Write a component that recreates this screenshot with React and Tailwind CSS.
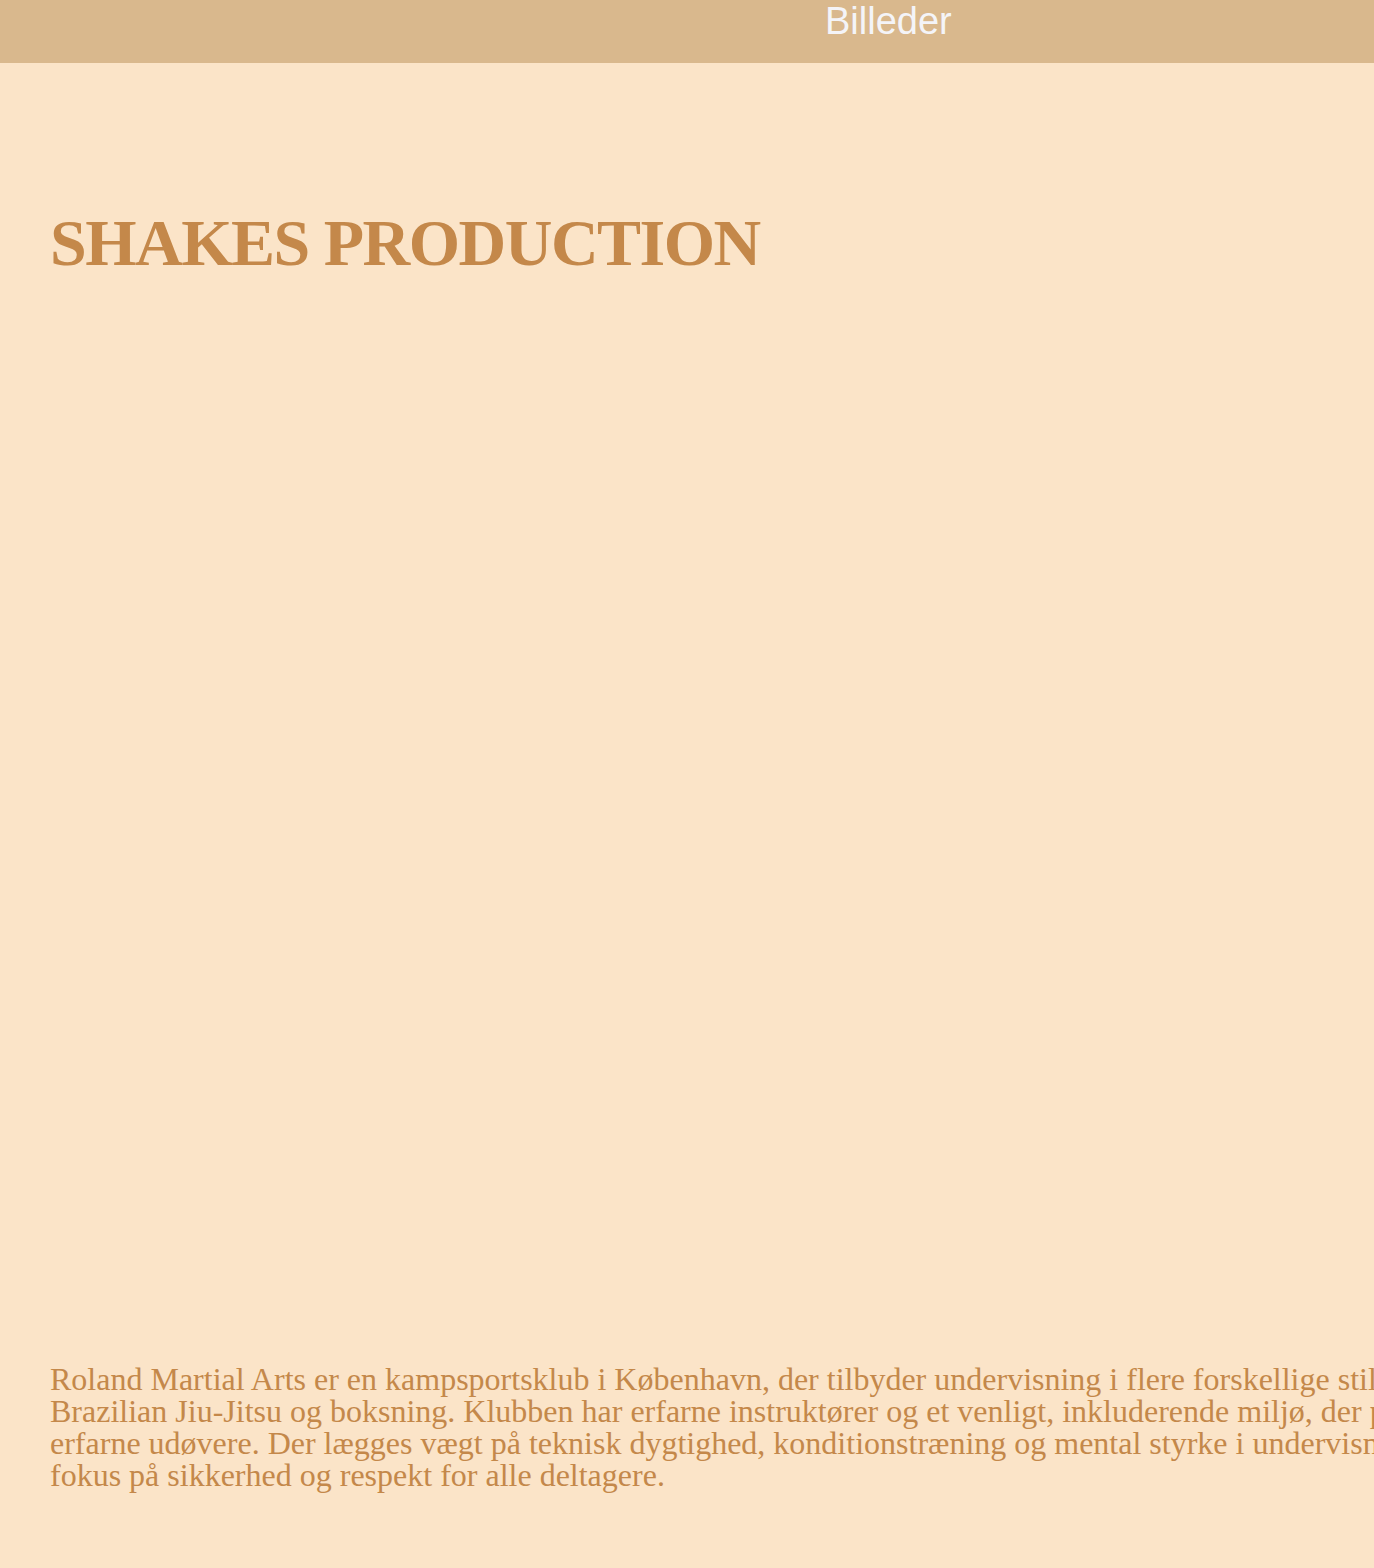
export default function App() {
  return (
    <div className="min-h-[1568px] w-[1374px] overflow-hidden bg-[#fbe4c8]">
      <header className="h-[63px] bg-[#d9b88d] flex">
        <div className="ml-[825px] text-[38px] leading-[42px] text-[#f4f4f8]" style={{ fontFamily: '"Liberation Sans", Arial, sans-serif' }}>
          Billeder
        </div>
      </header>
      <main className="pl-[50px]" style={{ fontFamily: '"Liberation Serif", "Times New Roman", serif' }}>
        <h1 className="mt-[140px] text-[66px] leading-[80px] font-bold tracking-[-1.5px] text-[#c4884a] whitespace-nowrap">
          SHAKES PRODUCTION
        </h1>
        <div className="h-[1080px]" />
        <p className="text-[32px] leading-[32px] text-[#c4884a] whitespace-nowrap">
          Roland Martial Arts er en kampsportsklub i København, der tilbyder undervisning i flere forskellige stilarter, herunder Muay Thai,
          <br />
          Brazilian Jiu-Jitsu og boksning. Klubben har erfarne instruktører og et venligt, inkluderende miljø, der passer til både nye og
          <br />
          erfarne udøvere. Der lægges vægt på teknisk dygtighed, konditionstræning og mental styrke i undervisningen, med et stort
          <br />
          fokus på sikkerhed og respekt for alle deltagere.
        </p>
      </main>
    </div>
  );
}
